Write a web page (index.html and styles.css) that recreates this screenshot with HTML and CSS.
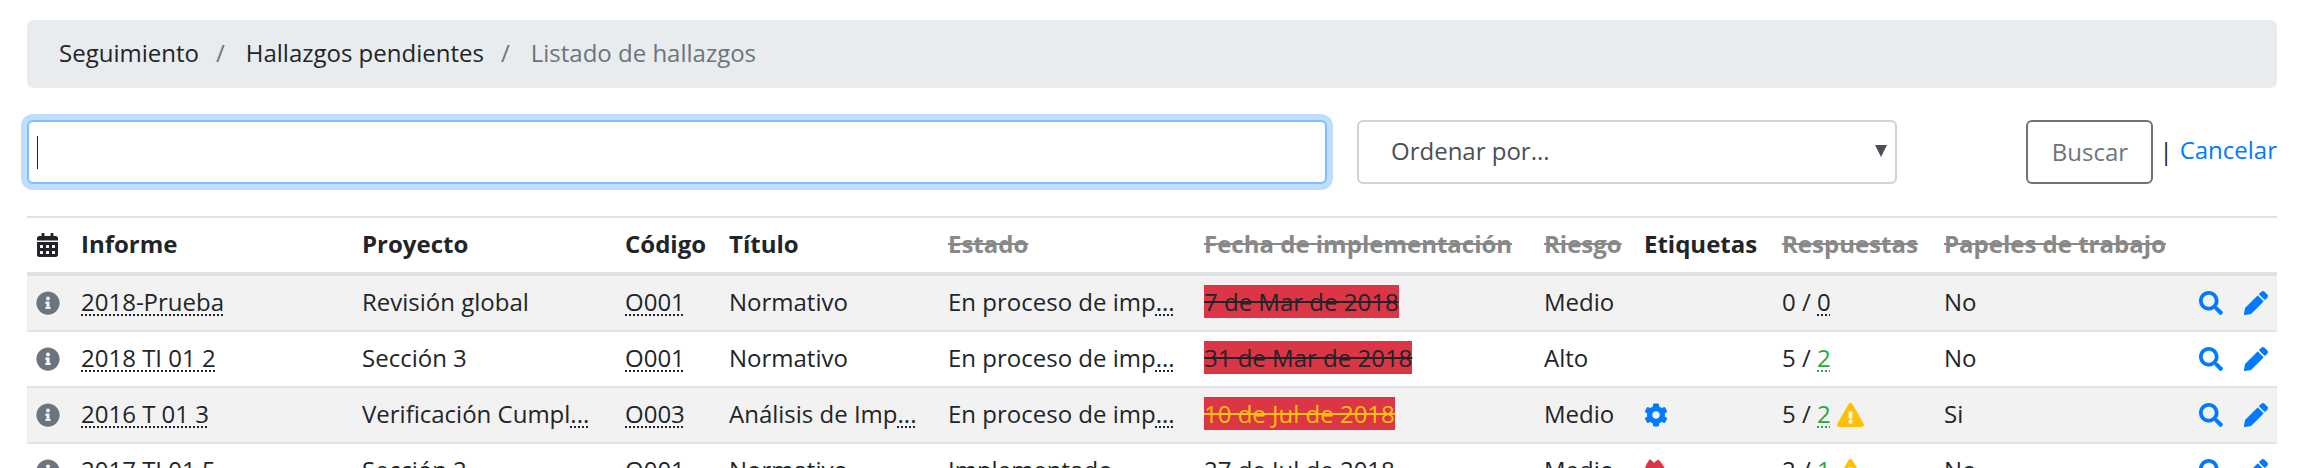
FILE: index.html
```html
<!DOCTYPE html>
<html lang="es">
<head>
<meta charset="UTF-8">
<meta name="viewport" content="width=device-width, initial-scale=1.0">
<link rel="stylesheet" href="styles.css">
<title>Listado de hallazgos</title>
</head>
<body>
  <svg class="icon-defs" aria-hidden="true">
    <symbol id="i-calendar" viewBox="0 0 448 512"><path d="M0 464c0 26.500 21.500 48 48 48h352c26.500 0 48-21.500 48-48V192H0v272zm320-196c0-6.600 5.400-12 12-12h40c6.600 0 12 5.400 12 12v40c0 6.600-5.400 12-12 12h-40c-6.600 0-12-5.400-12-12v-40zm0 128c0-6.600 5.400-12 12-12h40c6.600 0 12 5.400 12 12v40c0 6.600-5.400 12-12 12h-40c-6.600 0-12-5.400-12-12v-40zM192 268c0-6.600 5.400-12 12-12h40c6.600 0 12 5.400 12 12v40c0 6.600-5.400 12-12 12h-40c-6.600 0-12-5.400-12-12v-40zm0 128c0-6.600 5.400-12 12-12h40c6.600 0 12 5.400 12 12v40c0 6.600-5.400 12-12 12h-40c-6.600 0-12-5.400-12-12v-40zM64 268c0-6.600 5.400-12 12-12h40c6.600 0 12 5.400 12 12v40c0 6.600-5.400 12-12 12H76c-6.600 0-12-5.400-12-12v-40zm0 128c0-6.600 5.400-12 12-12h40c6.600 0 12 5.400 12 12v40c0 6.600-5.400 12-12 12H76c-6.600 0-12-5.400-12-12v-40zM400 64h-48V16c0-8.800-7.200-16-16-16h-32c-8.800 0-16 7.200-16 16v48H160V16c0-8.800-7.200-16-16-16h-32c-8.800 0-16 7.200-16 16v48H48C21.500 64 0 85.500 0 112v48h448v-48c0-26.500-21.500-48-48-48z"/></symbol>
    <symbol id="i-info" viewBox="0 0 512 512"><path d="M256 8C119.043 8 8 119.083 8 256c0 136.997 111.043 248 248 248s248-111.003 248-248C504 119.083 392.957 8 256 8zm0 110c23.196 0 42 18.804 42 42s-18.804 42-42 42-42-18.804-42-42 18.804-42 42-42zm56 254c0 6.627-5.373 12-12 12h-88c-6.627 0-12-5.373-12-12v-24c0-6.627 5.373-12 12-12h12v-64h-12c-6.627 0-12-5.373-12-12v-24c0-6.627 5.373-12 12-12h64c6.627 0 12 5.373 12 12v100h12c6.627 0 12 5.373 12 12v24z"/></symbol>
    <symbol id="i-search" viewBox="0 0 512 512"><path d="M505 442.700L405.300 343c-4.500-4.500-10.600-7-17-7H372c27.600-35.300 44-79.700 44-128C416 93.100 322.900 0 208 0S0 93.100 0 208s93.100 208 208 208c48.300 0 92.700-16.400 128-44v16.300c0 6.400 2.500 12.500 7 17l99.700 99.700c9.400 9.400 24.600 9.400 33.900 0l28.300-28.300c9.400-9.400 9.400-24.600.1-34zM208 336c-70.700 0-128-57.200-128-128 0-70.700 57.200-128 128-128 70.700 0 128 57.200 128 128 0 70.700-57.200 128-128 128z"/></symbol>
    <symbol id="i-pencil" viewBox="0 0 512 512"><path d="M497.900 142.100l-46.100 46.100c-4.700 4.700-12.300 4.700-17 0l-111-111c-4.700-4.700-4.700-12.300 0-17l46.100-46.100c18.700-18.700 49.100-18.700 67.900 0l60.100 60.100c18.800 18.700 18.800 49.100 0 67.900zM284.200 99.800L21.600 362.400.4 483.900c-2.900 16.400 11.400 30.600 27.800 27.800l121.500-21.300 262.600-262.600c4.700-4.700 4.700-12.300 0-17l-111-111c-4.800-4.700-12.400-4.700-17.100 0z"/></symbol>
    <symbol id="i-warning" viewBox="0 0 576 512"><path d="M569.517 440.013C587.975 472.007 564.806 512 527.940 512H48.054c-36.937 0-59.999-40.055-41.577-71.987L246.423 23.985c18.467-32.009 64.720-31.951 83.154 0l239.940 416.028zM288 354c-25.405 0-46 20.595-46 46s20.595 46 46 46 46-20.595 46-46-20.595-46-46-46zm-43.673-165.346l7.418 136c.347 6.364 5.609 11.346 11.982 11.346h48.546c6.373 0 11.635-4.982 11.982-11.346l7.418-136c.375-6.874-5.098-12.654-11.982-12.654h-63.383c-6.884 0-12.356 5.780-11.981 12.654z"/></symbol>
    <symbol id="i-cog" viewBox="0 0 512 512"><path d="M487.400 315.700l-42.600-24.600c4.300-23.200 4.300-47 0-70.200l42.600-24.600c4.900-2.800 7.100-8.600 5.500-14-11.100-35.600-30-67.800-54.700-94.600-3.800-4.100-10-5.100-14.800-2.300L380.800 110c-17.900-15.400-38.500-27.300-60.800-35.100V25.800c0-5.600-3.900-10.500-9.400-11.700-36.700-8.200-74.300-7.800-109.200 0-5.500 1.200-9.400 6.100-9.400 11.700V75c-22.200 7.900-42.800 19.800-60.800 35.100L88.700 85.500c-4.900-2.800-11-1.900-14.800 2.300-24.700 26.700-43.600 58.900-54.700 94.600-1.700 5.400.6 11.200 5.500 14L67.300 221c-4.300 23.200-4.300 47 0 70.200l-42.600 24.600c-4.900 2.800-7.100 8.600-5.500 14 11.100 35.600 30 67.800 54.700 94.600 3.800 4.100 10 5.100 14.800 2.300l42.600-24.600c17.900 15.400 38.500 27.300 60.800 35.100v49.200c0 5.600 3.900 10.500 9.400 11.700 36.700 8.200 74.300 7.800 109.200 0 5.500-1.200 9.400-6.100 9.400-11.700v-49.200c22.200-7.900 42.800-19.800 60.800-35.100l42.600 24.600c4.900 2.800 11 1.900 14.800-2.300 24.700-26.700 43.600-58.900 54.700-94.600 1.500-5.500-.7-11.300-5.600-14.100zM256 336c-44.100 0-80-35.900-80-80s35.900-80 80-80 80 35.900 80 80-35.900 80-80 80z"/></symbol>
    <symbol id="i-fire" viewBox="0 0 512 512"><path d="M128 0L213 80L300 8C370 70 430 150 460 260C480 400 380 512 256 512C120 512 10 420 10 280C10 170 70 70 128 0z"/></symbol>
  </svg>

  <nav class="breadcrumb">
    <a href="#">Seguimiento</a>
    <span class="crumb-sep">/</span>
    <a href="#">Hallazgos pendientes</a>
    <span class="crumb-sep">/</span>
    <span class="crumb-current">Listado de hallazgos</span>
  </nav>

  <form class="search-form">
    <div class="fake-input"><span class="caret"></span></div>
    <div class="fake-select">Ordenar por...<span class="select-arrow"></span></div>
    <div class="search-actions">
      <button type="button" class="btn-buscar">Buscar</button>
      <span class="pipe">|</span>
      <a href="#" class="link-cancel">Cancelar</a>
    </div>
  </form>

  <table class="findings">
    <colgroup>
      <col class="c-icon"><col class="c-informe"><col class="c-proyecto"><col class="c-codigo"><col class="c-titulo"><col class="c-estado"><col class="c-fecha"><col class="c-riesgo"><col class="c-etiquetas"><col class="c-respuestas"><col class="c-papeles"><col class="c-acciones">
    </colgroup>
    <thead>
      <tr>
        <th><svg class="icon icon-cal"><use href="#i-calendar"/></svg></th>
        <th>Informe</th>
        <th>Proyecto</th>
        <th>Código</th>
        <th>Título</th>
        <th class="off">Estado</th>
        <th class="off">Fecha de implementación</th>
        <th class="off">Riesgo</th>
        <th>Etiquetas</th>
        <th class="off">Respuestas</th>
        <th class="off">Papeles de trabajo</th>
        <th></th>
      </tr>
    </thead>
    <tbody>
      <tr>
        <td><svg class="icon icon-info"><use href="#i-info"/></svg></td>
        <td><abbr>2018-Prueba</abbr></td>
        <td>Revisión global</td>
        <td><abbr>O001</abbr></td>
        <td>Normativo</td>
        <td>En proceso de imp<abbr>...</abbr></td>
        <td><span class="late">7 de Mar de 2018</span></td>
        <td>Medio</td>
        <td></td>
        <td>0 / <abbr>0</abbr></td>
        <td>No</td>
        <td class="actions"><svg class="icon"><use href="#i-search"/></svg><svg class="icon"><use href="#i-pencil"/></svg></td>
      </tr>
      <tr>
        <td><svg class="icon icon-info"><use href="#i-info"/></svg></td>
        <td><abbr>2018 TI 01 2</abbr></td>
        <td>Sección 3</td>
        <td><abbr>O001</abbr></td>
        <td>Normativo</td>
        <td>En proceso de imp<abbr>...</abbr></td>
        <td><span class="late">31 de Mar de 2018</span></td>
        <td>Alto</td>
        <td></td>
        <td>5 / <abbr class="ok">2</abbr></td>
        <td>No</td>
        <td class="actions"><svg class="icon"><use href="#i-search"/></svg><svg class="icon"><use href="#i-pencil"/></svg></td>
      </tr>
      <tr>
        <td><svg class="icon icon-info"><use href="#i-info"/></svg></td>
        <td><abbr>2016 T 01 3</abbr></td>
        <td>Verificación Cumpl<abbr>...</abbr></td>
        <td><abbr>O003</abbr></td>
        <td>Análisis de Imp<abbr>...</abbr></td>
        <td>En proceso de imp<abbr>...</abbr></td>
        <td><span class="late warn">10 de Jul de 2018</span></td>
        <td>Medio</td>
        <td><svg class="icon icon-tag"><use href="#i-cog"/></svg></td>
        <td>5 / <abbr class="ok">2</abbr> <svg class="icon icon-warn"><use href="#i-warning"/></svg></td>
        <td>Si</td>
        <td class="actions"><svg class="icon"><use href="#i-search"/></svg><svg class="icon"><use href="#i-pencil"/></svg></td>
      </tr>
      <tr>
        <td><svg class="icon icon-info"><use href="#i-info"/></svg></td>
        <td><abbr>2017 TI 01 5</abbr></td>
        <td>Sección 2</td>
        <td><abbr>O001</abbr></td>
        <td>Normativo</td>
        <td>Implementado</td>
        <td>27 de Jul de 2018</td>
        <td>Medio</td>
        <td><svg class="icon icon-tag icon-red"><use href="#i-fire"/></svg></td>
        <td>2 / <abbr class="ok">1</abbr> <svg class="icon icon-warn"><use href="#i-warning"/></svg></td>
        <td>No</td>
        <td class="actions"><svg class="icon"><use href="#i-search"/></svg><svg class="icon"><use href="#i-pencil"/></svg></td>
      </tr>
    </tbody>
  </table>
</body>
</html>
```

FILE: styles.css
```css
html, body {
  height: 468px;
  overflow: hidden;
}

body {
  margin: 0;
  padding: 20px 33px 0 27px;
  box-sizing: border-box;
  background-color: #fff;
  color: #212529;
  font-family: "Open Sans", sans-serif;
  font-size: 24px;
  line-height: 36px;
}

a {
  text-decoration: none;
}

.icon-defs {
  display: none;
}

.breadcrumb {
  display: flex;
  box-sizing: border-box;
  height: 68px;
  align-items: center;
  padding: 0 32px 2px;
  background-color: #e9ecef;
  border-radius: 6px;
}

.breadcrumb a {
  color: #212529;
}

.crumb-sep {
  padding: 0 21px 0 17px;
  color: #6c757d;
}

.crumb-current {
  color: #6c757d;
}

.search-form {
  display: flex;
  align-items: stretch;
  height: 64px;
  margin-top: 32px;
}

.fake-input {
  display: flex;
  align-items: center;
  box-sizing: border-box;
  width: 1300px;
  padding-left: 8px;
  background-color: #fff;
  border: 2px solid #80bdff;
  border-radius: 6px;
  box-shadow: 0 0 0 6px #bfdeff;
}

.caret {
  width: 1px;
  height: 33px;
  background-color: #212529;
}

.fake-select {
  display: flex;
  align-items: center;
  justify-content: space-between;
  box-sizing: border-box;
  width: 540px;
  margin-left: 30px;
  padding: 0 8px 2px 32px;
  color: #495057;
  border: 2px solid #ced4da;
  border-radius: 6px;
}

.select-arrow {
  width: 0;
  height: 0;
  border-left: 6px solid transparent;
  border-right: 6px solid transparent;
  border-top: 12px solid #495057;
}

.search-actions {
  display: flex;
  align-items: center;
  margin-left: auto;
}

.btn-buscar {
  box-sizing: border-box;
  height: 64px;
  width: 127px;
  padding: 0 0 2px;
  color: #6c757d;
  font-family: inherit;
  font-size: 24px;
  background-color: #fff;
  border: 2px solid #6c757d;
  border-radius: 6px;
}

.pipe {
  margin: 0 7px 0 6px;
  padding-bottom: 2px;
}

.link-cancel {
  color: #007bff;
  padding-bottom: 4px;
}

.findings {
  width: 100%;
  table-layout: fixed;
  margin-top: 32px;
  border-collapse: collapse;
}

.c-icon { width: 54px; }
.c-informe { width: 281px; }
.c-proyecto { width: 263px; }
.c-codigo { width: 104px; }
.c-titulo { width: 219px; }
.c-estado { width: 256px; }
.c-fecha { width: 340px; }
.c-riesgo { width: 100px; }
.c-etiquetas { width: 138px; }
.c-respuestas { width: 162px; }
.c-papeles { width: 240px; }

.findings th,
.findings td {
  height: 36px;
  padding: 8px 0 10px;
  text-align: left;
  vertical-align: middle;
  white-space: nowrap;
  border-top: 2px solid #dee2e6;
}

.findings th {
  font-weight: 700;
  border-bottom: 4px solid #dee2e6;
}

.findings tbody tr:first-child td {
  border-top: 0;
}

.findings tbody tr:nth-child(odd) {
  background-color: #f2f2f2;
}

.off {
  color: #888;
  text-decoration: line-through;
}

abbr {
  text-decoration: underline dotted;
  text-decoration-thickness: 2px;
  text-underline-offset: 3px;
}

.ok {
  color: #28a745;
}

.late {
  background-color: #dc3545;
  text-decoration: line-through;
}

.late.warn {
  color: #ffc107;
}

.icon {
  display: inline-block;
  width: 24px;
  height: 24px;
  fill: #007bff;
  vertical-align: -4px;
}

.icon-cal {
  width: 21px;
  fill: #212529;
  margin-left: 10px;
}

.icon-info {
  fill: #6c757d;
  margin-left: 9px;
}

.icon-red {
  fill: #dc3545;
}

.icon-warn {
  width: 27px;
  fill: #ffc107;
}

.findings .actions {
  text-align: right;
  padding-right: 9px;
}

.actions .icon + .icon {
  margin-left: 21px;
}
```
